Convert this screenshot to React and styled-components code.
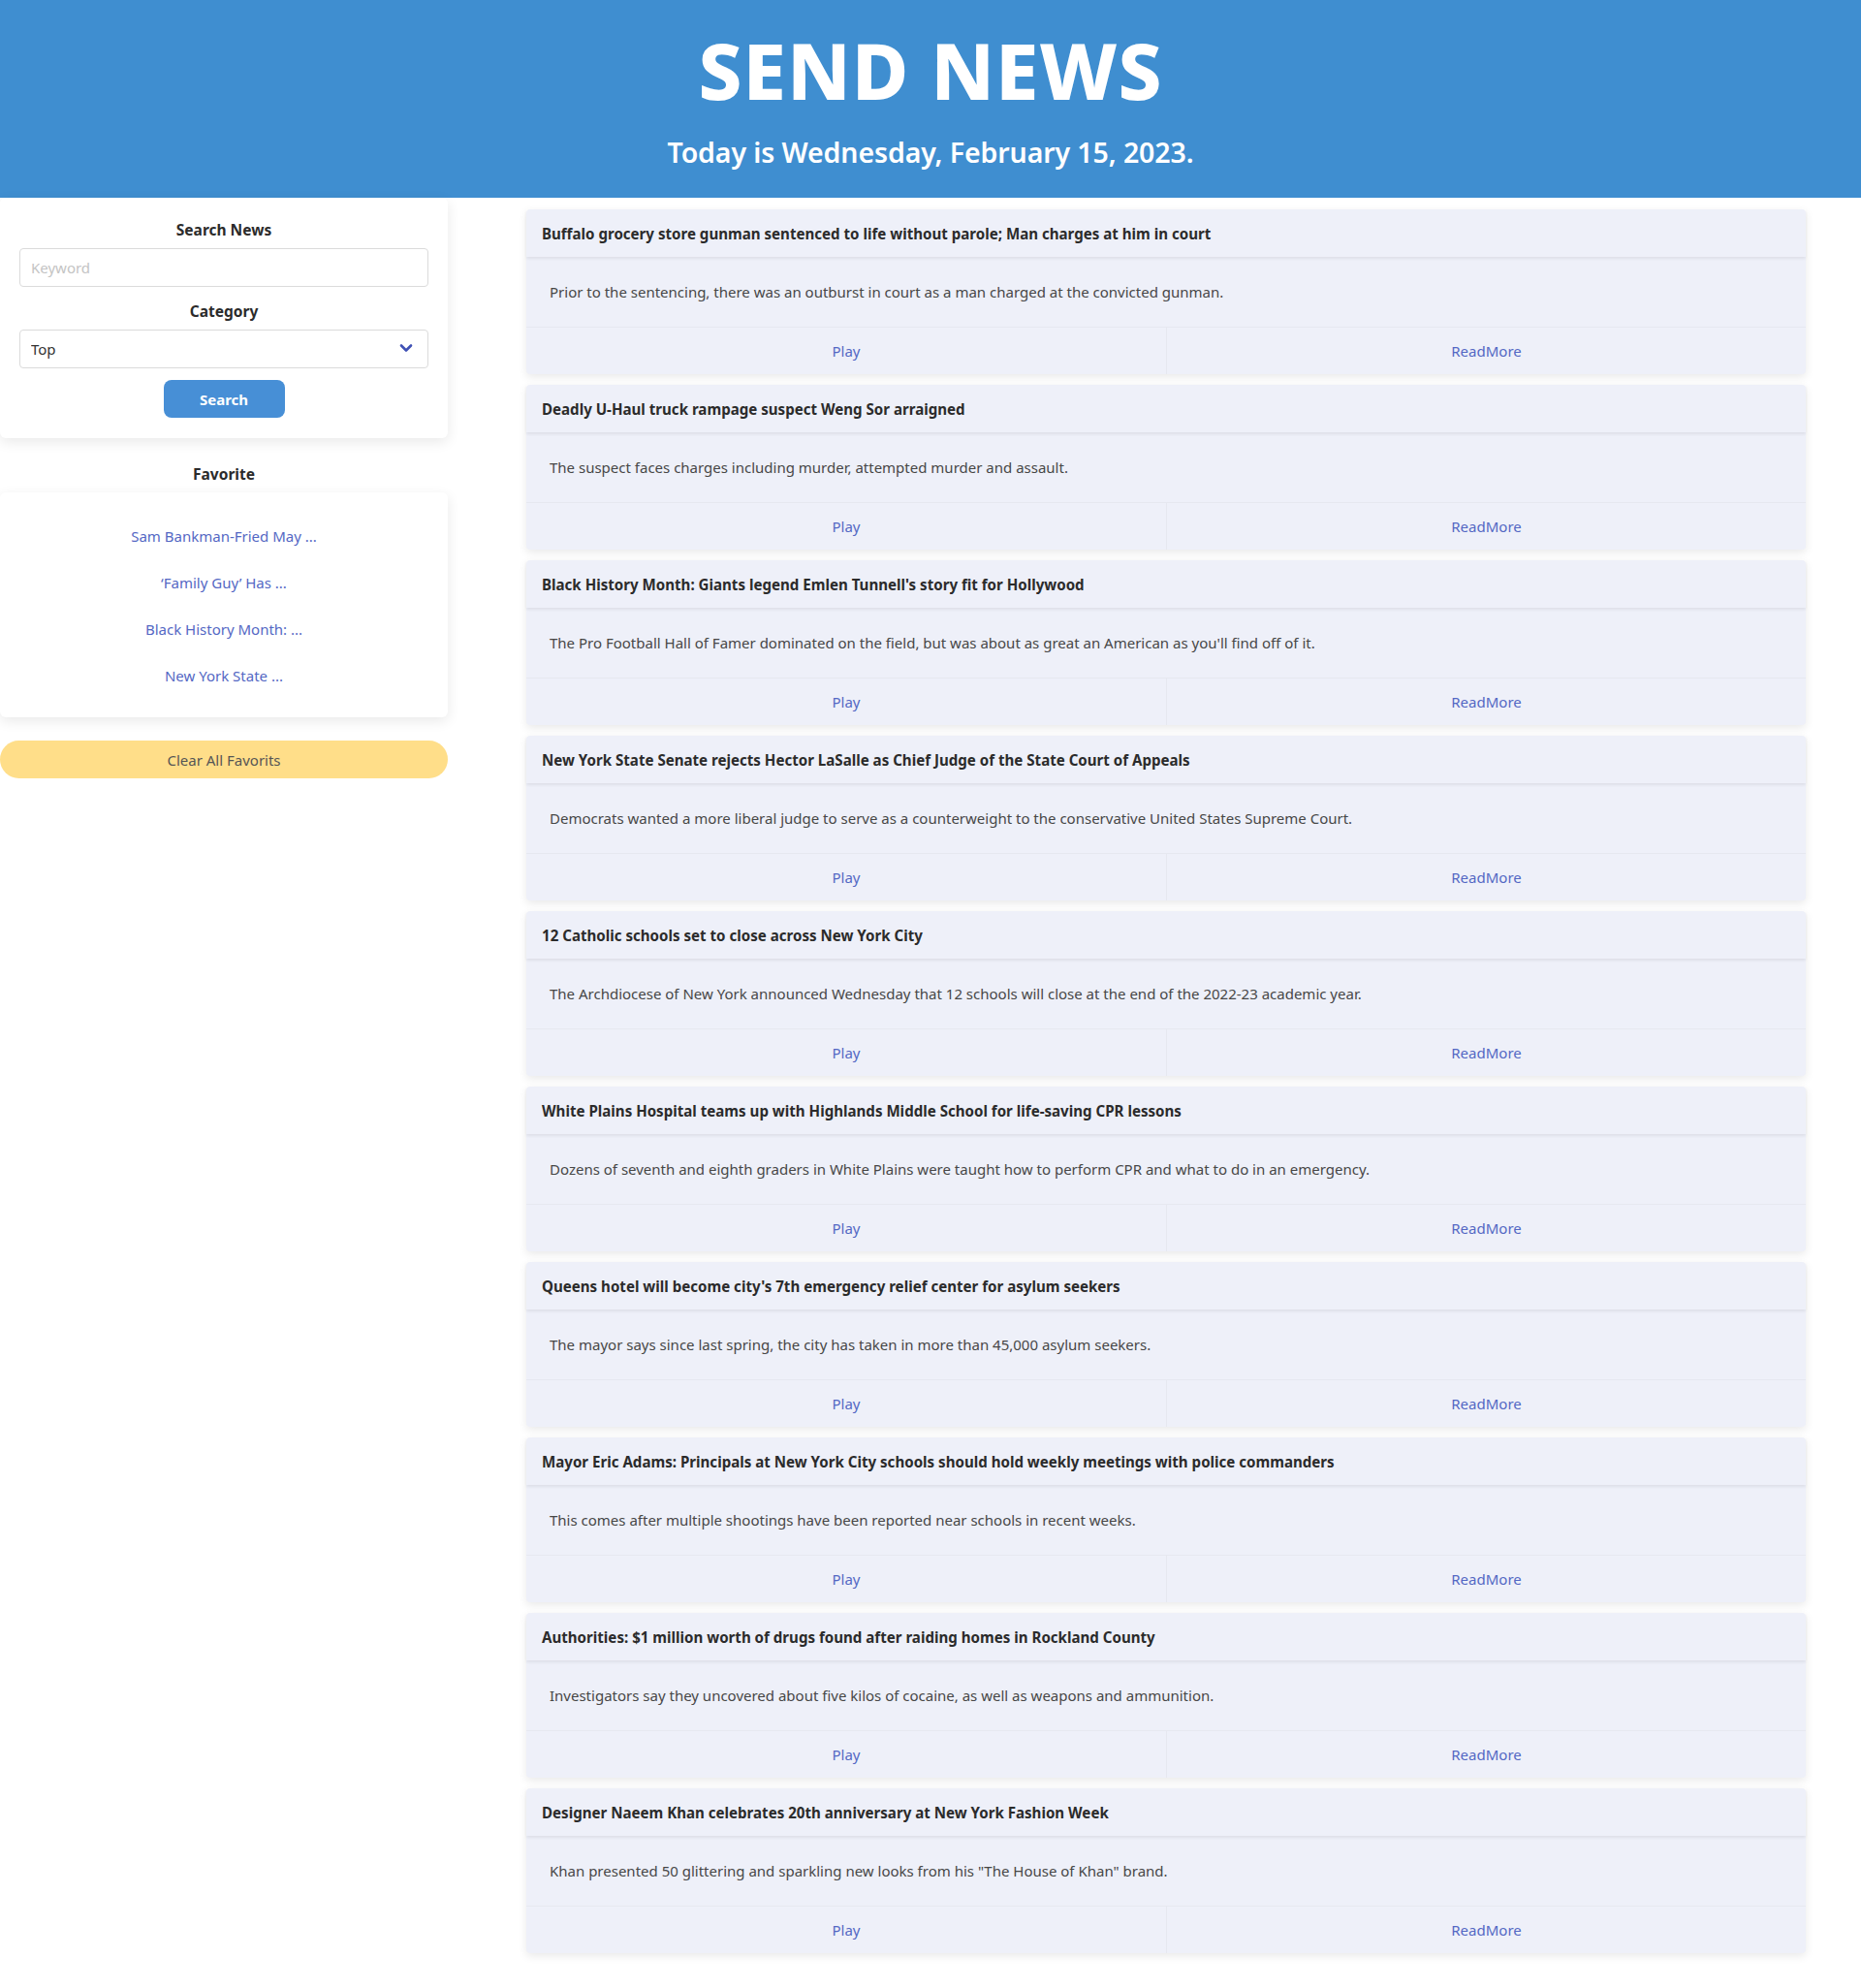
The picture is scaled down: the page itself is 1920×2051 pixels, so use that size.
import React from "react";
import styled, { createGlobalStyle } from "styled-components";

const GlobalStyle = createGlobalStyle`
  body {
    margin: 0;
    background: #ffffff;
    font-family: "Noto Sans", "Open Sans", sans-serif;
    color: #222;
  }
`;

const Header = styled.header`
  background-color: #3f8ed0;
  height: 204px;
  display: flex;
  flex-direction: column;
  align-items: center;
  color: #fff;
`;

const Title = styled.h1`
  margin: 22px 0 0;
  font-size: 80px;
  font-weight: 800;
  line-height: 100px;
  letter-spacing: 1px;
`;

const Today = styled.h2`
  margin: 15px 0 0;
  font-size: 28.5px;
  font-weight: 600;
  line-height: 40px;
  letter-spacing: -0.1px;
`;

const Layout = styled.div`
  display: grid;
  grid-template-columns: 462px 1fr;
  padding: 0 57px 40px 0;
`;

const Sidebar = styled.aside`
  display: flex;
  flex-direction: column;
`;

const Panel = styled.div`
  background: #fff;
  border-radius: 6px;
  box-shadow: 0 4px 14px rgba(0, 0, 0, 0.09);
`;

const SearchPanel = styled(Panel)`
  padding: 21px 20px 21px;
  display: flex;
  flex-direction: column;
  align-items: center;
`;

const Label = styled.div`
  font-size: 15.5px;
  font-weight: 700;
  line-height: 24px;
  color: #2b2b2b;
  text-align: center;
  margin-top: ${(p) => p.$top || 0}px;
`;

const Input = styled.input`
  box-sizing: border-box;
  width: 100%;
  height: 40px;
  margin-top: 7px;
  border: 1px solid #dbdbdb;
  border-radius: 4px;
  padding: 0 11px;
  font-family: inherit;
  font-size: 15px;
  color: #333;
  outline: none;
  &::placeholder {
    color: #c4c4c4;
  }
`;

const SelectWrap = styled.div`
  position: relative;
  width: 100%;
  margin-top: 7px;
`;

const Select = styled.select`
  box-sizing: border-box;
  width: 100%;
  height: 40px;
  border: 1px solid #dbdbdb;
  border-radius: 4px;
  padding: 0 11px;
  font-family: inherit;
  font-size: 15px;
  color: #333;
  background: #fff;
  appearance: none;
  outline: none;
`;

const Chevron = styled.svg`
  position: absolute;
  right: 16px;
  top: 14px;
  pointer-events: none;
`;

const SearchButton = styled.button`
  margin-top: 12px;
  width: 125px;
  height: 39px;
  border: none;
  border-radius: 8px;
  background: #478fd6;
  color: #fff;
  font-family: inherit;
  font-size: 15px;
  font-weight: 700;
`;

const FavPanel = styled(Panel)`
  margin-top: 7px;
  padding: 21px 0 19px;
  display: flex;
  flex-direction: column;
  align-items: center;
`;

const FavItem = styled.a`
  display: block;
  padding: 12px 0;
  line-height: 24px;
  font-size: 15px;
  color: #5468c4;
  text-decoration: none;
`;

const ClearButton = styled.button`
  margin-top: 24px;
  height: 39px;
  border: none;
  border-radius: 20px;
  background: #ffde89;
  color: #555;
  font-family: inherit;
  font-size: 15px;
`;

const Feed = styled.main`
  padding: 12px 0 0 81px;
  display: flex;
  flex-direction: column;
  gap: 11px;
`;

const Card = styled.article`
  background: #eef0f9;
  border-radius: 4px;
  box-shadow: 0 3px 10px rgba(0, 0, 0, 0.09);
  display: flex;
  flex-direction: column;
`;

const CardHead = styled.div`
  height: 49px;
  display: flex;
  align-items: center;
  padding: 0 16px;
  font-size: 15.1px;
  font-weight: 700;
  color: #2b2b2b;
  box-shadow: 0 2px 3px rgba(0, 0, 0, 0.07);
`;

const CardBody = styled.p`
  margin: 0;
  height: 72px;
  display: flex;
  align-items: center;
  padding: 0 24px;
  font-size: 15px;
  color: #474747;
`;

const CardFoot = styled.div`
  height: 49px;
  display: grid;
  grid-template-columns: 1fr 1fr;
  border-top: 1px solid #e6e8f0;
  box-sizing: border-box;
`;

const FootLink = styled.a`
  display: flex;
  align-items: center;
  justify-content: center;
  font-size: 15px;
  color: #5468c4;
  text-decoration: none;
  & + & {
    border-left: 1px solid #e6e8f0;
  }
`;

const favorites = [
  "Sam Bankman-Fried May ...",
  "\u2018Family Guy\u2019 Has ...",
  "Black History Month: ...",
  "New York State ...",
];

const news = [
  ["Buffalo grocery store gunman sentenced to life without parole; Man charges at him in court", "Prior to the sentencing, there was an outburst in court as a man charged at the convicted gunman."],
  ["Deadly U-Haul truck rampage suspect Weng Sor arraigned", "The suspect faces charges including murder, attempted murder and assault."],
  ["Black History Month: Giants legend Emlen Tunnell's story fit for Hollywood", "The Pro Football Hall of Famer dominated on the field, but was about as great an American as you'll find off of it."],
  ["New York State Senate rejects Hector LaSalle as Chief Judge of the State Court of Appeals", "Democrats wanted a more liberal judge to serve as a counterweight to the conservative United States Supreme Court."],
  ["12 Catholic schools set to close across New York City", "The Archdiocese of New York announced Wednesday that 12 schools will close at the end of the 2022-23 academic year."],
  ["White Plains Hospital teams up with Highlands Middle School for life-saving CPR lessons", "Dozens of seventh and eighth graders in White Plains were taught how to perform CPR and what to do in an emergency."],
  ["Queens hotel will become city's 7th emergency relief center for asylum seekers", "The mayor says since last spring, the city has taken in more than 45,000 asylum seekers."],
  ["Mayor Eric Adams: Principals at New York City schools should hold weekly meetings with police commanders", "This comes after multiple shootings have been reported near schools in recent weeks."],
  ["Authorities: $1 million worth of drugs found after raiding homes in Rockland County", "Investigators say they uncovered about five kilos of cocaine, as well as weapons and ammunition."],
  ["Designer Naeem Khan celebrates 20th anniversary at New York Fashion Week", "Khan presented 50 glittering and sparkling new looks from his \"The House of Khan\" brand."],
];

const App = () => {
  return (
    <>
      <GlobalStyle />
      <Header>
        <Title>SEND NEWS</Title>
        <Today>Today is Wednesday, February 15, 2023.</Today>
      </Header>
      <Layout>
        <Sidebar>
          <SearchPanel>
            <Label>Search News</Label>
            <Input placeholder="Keyword" />
            <Label $top={13}>Category</Label>
            <SelectWrap>
              <Select defaultValue="top">
                <option value="top">Top</option>
              </Select>
              <Chevron width="14" height="10" viewBox="0 0 14 10">
                <path d="M2 2.5 L7 7.5 L12 2.5" fill="none" stroke="#3f51b5" strokeWidth="2.6" strokeLinecap="round" strokeLinejoin="round" />
              </Chevron>
            </SelectWrap>
            <SearchButton>Search</SearchButton>
          </SearchPanel>
          <Label $top={25}>Favorite</Label>
          <FavPanel>
            {favorites.map((f) => (
              <FavItem key={f} href="#">{f}</FavItem>
            ))}
          </FavPanel>
          <ClearButton>Clear All Favorits</ClearButton>
        </Sidebar>
        <Feed>
          {news.map(([title, desc]) => (
            <Card key={title}>
              <CardHead>{title}</CardHead>
              <CardBody>{desc}</CardBody>
              <CardFoot>
                <FootLink href="#">Play</FootLink>
                <FootLink href="#">ReadMore</FootLink>
              </CardFoot>
            </Card>
          ))}
        </Feed>
      </Layout>
    </>
  );
};

export default App;
